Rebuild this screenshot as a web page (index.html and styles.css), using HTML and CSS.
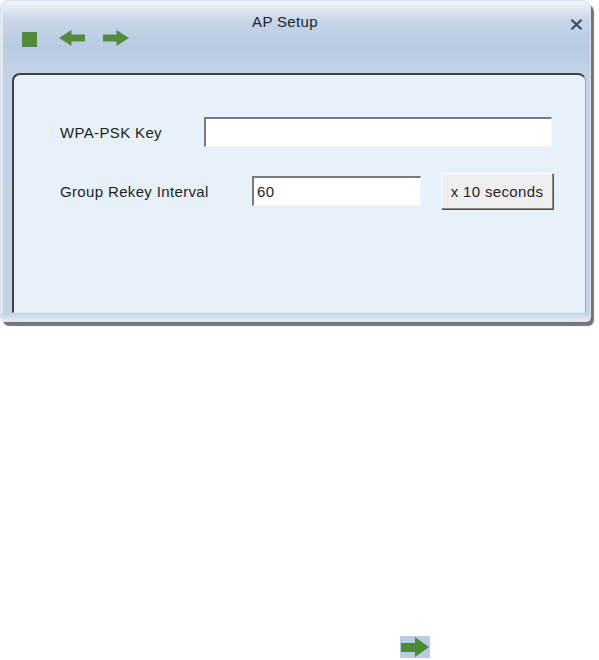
FILE: index.html
```html
<!DOCTYPE html>
<html lang="en">
<head>
  <meta charset="UTF-8" />
  <meta name="viewport" content="width=device-width, initial-scale=1.0"/>
  <title>AP Setup</title>
  <link rel="stylesheet" href="styles.css">
</head>
<body>

<div class="window">
  <div class="titlebar">
    <div class="title-row">
      <span class="title">AP Setup</span>
      <button class="close-btn" title="Close">
        <svg width="13" height="11" viewBox="0 0 13 11"><path d="M1.5 0.8 L11.5 10.2 M11.5 0.8 L1.5 10.2" stroke="#3b4a6d" stroke-width="2.2"/></svg>
      </button>
    </div>
    <div class="tools">
      <span class="stop"></span>
      <svg class="back" width="26" height="17" viewBox="0 0 26 17"><polygon points="0,8 12.5,0 12.5,4.5 26,4.5 26,11.5 12.5,11.5 12.5,16" fill="#528b3e"/></svg>
      <svg class="next" width="26" height="17" viewBox="0 0 26 17"><polygon points="0,4.5 13.5,4.5 13.5,0 26,8 13.5,16 13.5,11.5 0,11.5" fill="#528b3e"/></svg>
    </div>
  </div>

  <div class="panel">
    <div class="row">
      <label class="lbl lbl-key">WPA-PSK Key</label>
      <input class="field field-key" type="text" value="">
    </div>
    <div class="row row-rekey">
      <label class="lbl lbl-rekey">Group Rekey Interval</label>
      <input class="field field-rekey" type="text" value="60">
      <button class="unit-btn">x 10 seconds</button>
    </div>
  </div>
  <div class="frame-bottom"></div>
</div>

<div class="footer">
  <span class="next-box">
    <svg width="30" height="22" viewBox="0 0 30 22"><polygon points="1,7 15,7 15,1 29,11 15,21 15,16 1,16" fill="#4b8a37"/></svg>
  </span>
</div>

</body>
</html>
```

FILE: styles.css
```css
body {
  margin: 0;
  background: #ffffff;
  font-family: "Liberation Sans", Arial, sans-serif;
  font-size: 15px;
  letter-spacing: 0.35px;
  color: #1e1e1e;
}
.window {
  width: 591px;
  height: 322px;
  box-sizing: border-box;
  border: 1px solid #dbe3ee;
  border-radius: 8px 8px 6px 6px;
  background: linear-gradient(to bottom, #f0f4f9 0, #c6d5e8 20px, #b9cbe3 45px, #c3d2e6 73px, #c4d2e6 100%);
  box-shadow: 3px 4px 1px #747474, inset 2px 0 0 #e4eaf3;
}
.titlebar {
  height: 72px;
}
.title-row {
  display: flex;
  padding-top: 13px;
  padding-right: 7px;
}
.title {
  flex: 1;
  text-align: center;
  line-height: 15px;
  color: #1e2330;
}
.close-btn {
  background: none;
  border: none;
  padding: 0;
  margin-top: 4px;
  width: 14px;
  height: 11px;
  cursor: pointer;
}
.tools {
  display: flex;
  align-items: flex-start;
  padding-left: 21px;
  margin-top: 1px;
}
.stop {
  width: 15px;
  height: 15px;
  margin-top: 2px;
  background: #528b3e;
}
.back { margin-left: 22px; }
.next { margin-left: 18px; }
.panel {
  margin-left: 11px;
  width: 574px;
  height: 240px;
  box-sizing: border-box;
  background: #e6f1f9;
  border-top: 2px solid #3d3f42;
  border-left: 2px solid #3d3f42;
  border-right: 1px solid #97a5b8;
  border-bottom: 1px solid #dde7f2;
  border-radius: 8px 8px 0 0;
  padding: 42px 0 0 46px;
}
.row {
  display: flex;
  align-items: center;
}
.row-rekey {
  margin-top: 26px;
}
.lbl-key { width: 144px; }
.lbl-rekey { width: 192px; }
.field {
  height: 30px;
  box-sizing: border-box;
  background: #ffffff;
  border-top: 2px solid #7a7a7a;
  border-left: 2px solid #7a7a7a;
  border-right: 1px solid #f4f4f4;
  border-bottom: 1px solid #f4f4f4;
  padding: 0 3px;
  font: inherit;
  letter-spacing: inherit;
  color: #1e1e1e;
  outline: none;
}
.field-key { width: 348px; }
.field-rekey { width: 169px; }
.unit-btn {
  margin-left: 20px;
  width: 112px;
  height: 36px;
  background: #efefef;
  border: 1px solid;
  border-color: #ffffff #8a8a8a #8a8a8a #ffffff;
  box-shadow: 1px 1px 0 #505050;
  font: inherit;
  letter-spacing: inherit;
  color: #1e1e1e;
  padding: 0;
}
.frame-bottom {
  height: 8px;
  background: linear-gradient(to bottom, #c4d1e4, #e4eaf2);
}
.footer {
  margin-top: 314px;
  padding-left: 400px;
}
.next-box {
  display: inline-block;
  width: 30px;
  height: 22px;
  background: #b9cce4;
}
.next-box svg { display: block; }
```
